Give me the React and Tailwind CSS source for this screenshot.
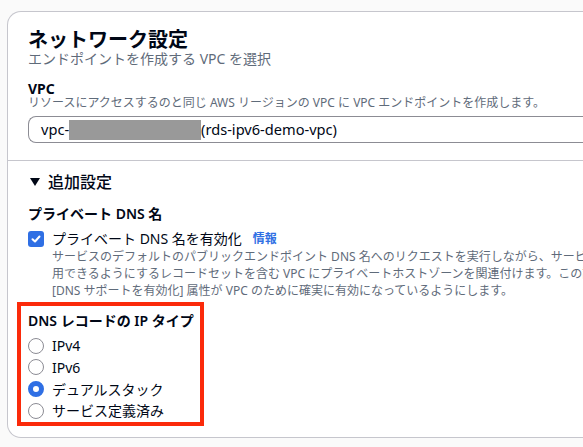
export default function App() {
  const font = { fontFamily: '"Noto Sans", "Noto Sans CJK JP", sans-serif' };
  const Radio = ({ checked, label }) => (
    <div className="flex items-center h-[21.67px]">
      {checked ? (
        <span className="w-[16px] h-[16px] rounded-full border-[5px] border-[#2f6fe4] bg-white box-border shrink-0" />
      ) : (
        <span className="w-[16px] h-[16px] rounded-full border-[1.5px] border-[#8c8c94] bg-white box-border shrink-0" />
      )}
      <span className="ml-[8px] text-[14px] leading-[21px] text-[#000716]">{label}</span>
    </div>
  );
  return (
    <div className="w-[583px] h-[447px] overflow-hidden bg-[#fafafa] pt-[11px] pl-[7px]" style={font}>
      <div className="w-[700px] h-[427px] bg-white border border-r-0 border-[#c6c6cd] rounded-l-[14px] overflow-hidden">
        <div className="pl-[20px] pt-[17px] pb-[17px] border-b border-[#c6c6cd]">
          <div className="text-[20px] leading-[22px] font-bold text-[#000716]">ネットワーク設定</div>
          <div className="text-[14px] leading-[16px] text-[#5f6b7a]">エンドポイントを作成する VPC を選択</div>
          <div className="mt-[15px] text-[14px] leading-[14px] font-bold text-[#000716]">VPC</div>
          <div className="text-[12px] leading-[14px] text-[#5f6b7a] whitespace-nowrap">リソースにアクセスするのと同じ AWS リージョンの VPC に VPC エンドポイントを作成します。</div>
          <div className="mt-[6px] h-[27px] border border-r-0 border-[#8c8c94] rounded-l-[8px] flex items-center pl-[12px] text-[14.6px] text-[#000716]">
            <span>vpc-</span>
            <span className="inline-block w-[132px] h-[20px] bg-[#999999]" />
            <span>(rds-ipv6-demo-vpc)</span>
          </div>
        </div>
        <div className="pl-[20px] pt-[11px]">
          <div className="flex items-center h-[20px]">
            <svg width="10" height="8" viewBox="0 0 10 8" className="ml-[2px]">
              <polygon points="0,0 10,0 5,8" fill="#000716" />
            </svg>
            <span className="ml-[8px] text-[16px] leading-[20px] text-[#000716] font-medium">追加設定</span>
          </div>
          <div className="mt-[13px] text-[14px] leading-[18px] font-semibold text-[#000716]">プライベート DNS 名</div>
          <div className="mt-[7px] flex items-center h-[18px]">
            <span className="w-[16px] h-[16px] rounded-[3px] bg-[#2f6fe4] flex items-center justify-center shrink-0">
              <svg width="12" height="12" viewBox="0 0 12 12">
                <polyline points="2.5,6.2 5,8.5 9.5,3.5" fill="none" stroke="white" strokeWidth="2" strokeLinecap="round" strokeLinejoin="round" />
              </svg>
            </span>
            <span className="ml-[8px] text-[14px] leading-[18px] text-[#000716]">プライベート DNS 名を有効化</span>
            <span className="ml-[11px] text-[12px] leading-[18px] font-bold text-[#2f6fe4]">情報</span>
          </div>
          <div className="pl-[24px] text-[12px] leading-[17px] text-[#5f6b7a] whitespace-nowrap">
            <div>サービスのデフォルトのパブリックエンドポイント DNS 名へのリクエストを実行しながら、サービスを利</div>
            <div>用できるようにするレコードセットを含む VPC にプライベートホストゾーンを関連付けます。この設定を使用するには、</div>
            <div>[DNS サポートを有効化] 属性が VPC のために確実に有効になっているようにします。</div>
          </div>
          <div className="mt-[3px] -ml-[11px] w-[187px] border-[4px] border-[#fb2a0a] pl-[7px] pt-[6px]">
            <div className="text-[14px] leading-[18px] font-semibold text-[#000716] whitespace-nowrap">DNS レコードの IP タイプ</div>
            <div className="mt-[5px]">
              <Radio label="IPv4" />
              <Radio label="IPv6" />
              <Radio checked label="デュアルスタック" />
              <Radio label="サービス定義済み" />
            </div>
          </div>
        </div>
      </div>
    </div>
  );
}
